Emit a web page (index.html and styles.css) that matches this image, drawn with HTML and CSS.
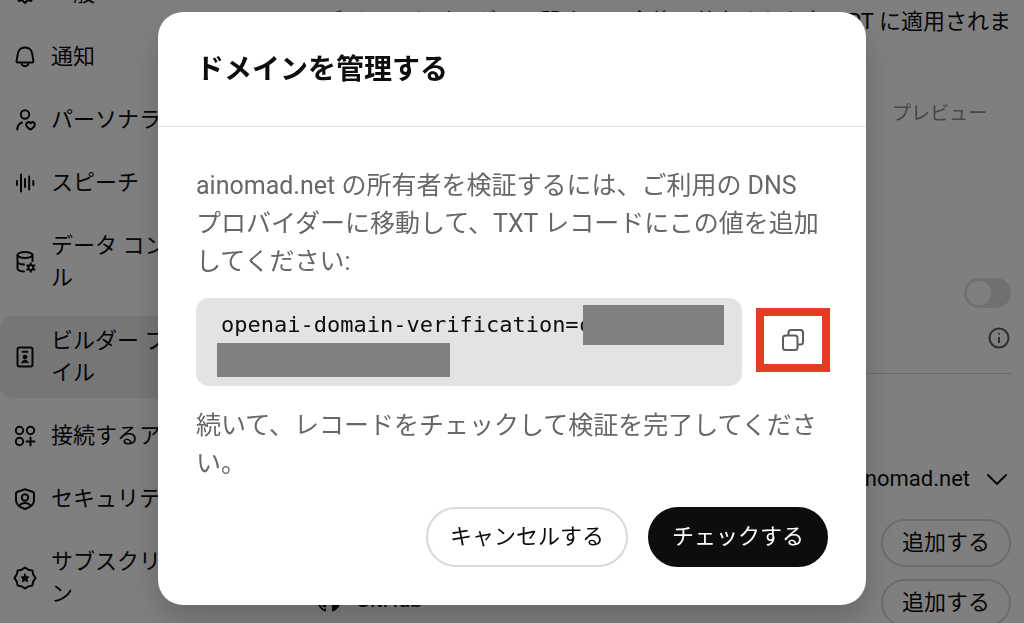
FILE: index.html
```html
<!DOCTYPE html>
<html lang="ja">
<head>
<meta charset="utf-8">
<meta name="viewport" content="width=device-width, initial-scale=1">
<title>ドメインを管理する</title>
<link rel="stylesheet" href="styles.css">
</head>
<body>
<div class="page">
  <nav class="sidebar" aria-label="設定">
    <a class="item" href="#"><svg class="icon" viewBox="0 0 24 24"><path d="M10 3h4l1 3 3-1 2 4-2 3 2 3-2 4-3-1-3 3-3-3-3 1-2-4 2-3-2-3 2-4 3 1z"/><circle cx="12" cy="12" r="3"/></svg><span>一般</span></a>
    <a class="item" href="#"><svg class="icon" viewBox="0 0 24 24"><path d="M12 2.500c-4.400 0-7 3-7.300 7L3.600 16q-.2 1.500 1.200 1.500h14.400q1.400 0 1.200-1.500l-1.100-6.500c-.3-4-2.900-7-7.300-7zM8.500 18c.4 4.200 6.600 4.200 7 0"/></svg><span>通知</span></a>
    <a class="item" href="#"><svg class="icon" viewBox="0 0 24 24"><circle cx="12" cy="6.500" r="4.200"/><path d="M9 14.500c-3 1-4.500 3.500-4.800 7M17.500 21.500c-2.800-1.500-4.300-3.200-4.300-5 0-2.600 3-3.200 4.300-1.200 1.300-2 4.300-1.400 4.300 1.200 0 1.800-1.500 3.500-4.300 5z"/></svg><span>パーソナライズ</span></a>
    <a class="item" href="#"><svg class="icon" viewBox="0 0 24 24"><path d="M4 10v4M8 3.500v17M12 8v8M16.200 5.500v13M20.300 10v4"/></svg><span>スピーチ</span></a>
    <a class="item" href="#"><svg class="icon" viewBox="0 0 24 24"><ellipse cx="12" cy="5" rx="7.500" ry="3"/><path d="M4.500 5v13.500c0 1.500 2.500 2.700 6.500 3M19.500 5v6M4.500 12c.3 1.300 2.800 2.300 6.500 2.500"/><circle cx="17.800" cy="17.500" r="2.500"/><path d="M17.800 13.300v1.500M17.800 20.200v1.500M14.200 15.400l1.300.8M20.100 18.800l1.300.8M21.400 15.400l-1.300.8M15.500 18.800l-1.300.8"/></svg><span>データ コントロール</span></a>
    <a class="item item-active" href="#" aria-current="page"><svg class="icon" viewBox="0 0 24 24"><rect x="4.500" y="2.500" width="15" height="19" rx="2"/><path d="M9.700 6.700h4.600"/><circle class="solid" cx="12" cy="12" r="1.900"/><path class="solid" d="M8.800 17.800c.8-3.600 5.600-3.600 6.400 0q-3.200-1.300-6.400 0z"/></svg><span>ビルダー プロファイル</span></a>
    <a class="item" href="#"><svg class="icon" viewBox="0 0 24 24"><circle cx="6.500" cy="6.500" r="3.700"/><circle cx="17.500" cy="6.500" r="3.700"/><circle cx="6.500" cy="17.500" r="3.700"/><path d="M17.500 13.500v8M13.500 17.500h8"/></svg><span>接続するアプリ</span></a>
    <a class="item" href="#"><svg class="icon" viewBox="0 0 24 24"><path d="M12 2.300 20 5q1 .4 1 1.500V13c0 4.500-4 7.500-9 9-5-1.500-9-4.500-9-9V6.500Q3 5.400 4 5z"/><circle cx="12" cy="10.500" r="3.200"/><path d="M6.500 18.500c2.300-3.300 8.700-3.300 11 0"/></svg><span>セキュリティ</span></a>
    <a class="item" href="#"><svg class="icon" viewBox="0 0 24 24"><path d="M12 1.500Q15.300 4.500 19.400 4.600 19.500 8.700 22.500 12 19.500 15.300 19.400 19.400 15.300 19.500 12 22.500 8.700 19.500 4.600 19.400 4.500 15.300 1.500 12 4.500 8.700 4.600 4.600 8.700 4.500 12 1.500z"/><path class="solid" d="m12 8 1.200 2.700 2.900.3-2.200 1.900.7 2.900-2.600-1.500-2.600 1.500.7-2.900L7.900 11l2.900-.3z"/></svg><span>サブスクリプション</span></a>
  </nav>
  <main class="content">
    <p class="intro">デザインやビルダーの設定は、全体で共有された各 GPT に適用されま</p>
    <p class="preview">プレビュー</p>
    <div class="toggle-row"><input class="toggle" type="checkbox" role="switch" aria-label="名前を表示"></div>
    <div class="info-row"><button class="plain" type="button" aria-label="詳細"><svg class="info-icon" viewBox="0 0 24 24"><circle cx="12" cy="12" r="9.500"/><path d="M12 11v6M12 7v1.500"/></svg></button></div>
    <div class="domain-row"><button class="plain domain" type="button">ainomad.net<svg class="icon" viewBox="0 0 24 24"><path d="m3 8 9 9 9-9"/></svg></button></div>
    <ul class="links">
      <li class="link-row"><span class="service"><svg class="icon" viewBox="0 0 24 24"><rect x="2" y="2" width="20" height="20" rx="3"/><path d="M7 10v8M11 18v-8M11 14c0-5 6-5 6 0v4"/></svg>LinkedIn</span><button class="button add" type="button">追加する</button></li>
      <li class="link-row"><span class="service"><svg class="mark" viewBox="0 0 16 16"><path d="M8 0C3.580 0 0 3.580 0 8c0 3.540 2.290 6.530 5.470 7.590.4.070.55-.17.55-.38 0-.19-.01-.82-.01-1.490-2.010.37-2.530-.49-2.690-.94-.09-.23-.48-.94-.82-1.130-.28-.15-.68-.52-.01-.53.63-.01 1.080.58 1.230.82.72 1.210 1.870.87 2.330.66.07-.52.28-.87.51-1.070-1.780-.2-3.640-.89-3.640-3.950 0-.87.31-1.590.82-2.150-.08-.2-.36-1.020.08-2.120 0 0 .67-.21 2.200.82.64-.18 1.320-.27 2-.27s1.360.09 2 .27c1.530-1.040 2.200-.82 2.200-.82.44 1.100.16 1.920.08 2.120.51.56.82 1.270.82 2.150 0 3.070-1.870 3.750-3.650 3.950.29.25.54.73.54 1.480 0 1.070-.01 1.930-.01 2.200 0 .21.15.46.55.38A8 8 0 0 0 16 8c0-4.420-3.580-8-8-8z"/></svg>GitHub</span><button class="button add" type="button">追加する</button></li>
    </ul>
  </main>
</div>
<div class="backdrop">
  <section class="dialog" role="dialog" aria-modal="true" aria-labelledby="dialog-title">
    <header class="dialog-header"><h2 id="dialog-title">ドメインを管理する</h2></header>
    <div class="dialog-body">
      <p>ainomad.net の所有者を検証するには、ご利用の DNS プロバイダーに移動して、TXT レコードにこの値を追加してください:</p>
      <div class="record">
        <code class="record-value">
          <span class="record-line"><span>openai-domain-verification=c</span><span class="mask mask-end"></span></span>
          <span class="mask mask-next"></span>
        </code>
        <button class="copy" type="button" aria-label="コピー"><svg class="icon" viewBox="0 0 24 24"><rect x="2" y="7.500" width="14.500" height="14.500" rx="2.500"/><path d="M7.500 7V4.500Q7.500 2 10 2h9.500Q22 2 22 4.500V14q0 2.500-2.500 2.500H17"/></svg></button>
      </div>
      <p>続いて、レコードをチェックして検証を完了してください。</p>
    </div>
    <footer class="dialog-footer">
      <button class="button cancel" type="button">キャンセルする</button>
      <button class="button check" type="button">チェックする</button>
    </footer>
  </section>
</div>
</body>
</html>
```
FILE: styles.css
```css
* { box-sizing: border-box; }

body {
  margin: 0;
  height: 100vh;
  overflow: hidden;
  background: #fff;
  color: #0d0d0d;
  font: 22px/32px Roboto, "Noto Sans CJK JP", sans-serif;
}

p, h2, ul { margin: 0; padding: 0; }
button { font: inherit; color: inherit; cursor: pointer; }

.icon {
  flex: none;
  width: 24px;
  height: 24px;
  fill: none;
  stroke: currentColor;
  stroke-width: 2;
  stroke-linecap: round;
  stroke-linejoin: round;
}
.icon .solid { fill: currentColor; stroke-width: 1; }
.mark { flex: none; width: 24px; height: 24px; fill: currentColor; }

.page { display: flex; height: 100%; overflow: hidden; }

.sidebar {
  flex: none;
  width: 250px;
  margin-top: -31px;
  display: flex;
  flex-direction: column;
  gap: 13px;
}
.item {
  flex: none;
  display: flex;
  align-items: center;
  gap: 14px;
  padding: 9px 12px 9px 13px;
  border-radius: 12px;
  color: inherit;
  text-decoration: none;
}
.item-active { background: #ececec; }

.content {
  flex: 1;
  min-width: 0;
  display: flex;
  flex-direction: column;
  padding: 6px 13px 0 67px;
}
.intro { align-self: flex-end; white-space: nowrap; }
.preview {
  align-self: flex-end;
  margin: 60px 24px 0 0;
  color: #8f8f8f;
  font-size: 19px;
}
.toggle-row { display: flex; justify-content: flex-end; margin-top: 148px; }
.toggle {
  appearance: none;
  width: 47px;
  height: 30px;
  margin: 0;
  padding: 3px;
  border-radius: 15px;
  background: #e0e0e0;
}
.toggle::before {
  content: "";
  display: block;
  width: 24px;
  height: 24px;
  border-radius: 50%;
  background: #fff;
}
.info-row {
  display: flex;
  justify-content: flex-end;
  padding: 18px 0 23px;
  border-bottom: 1px solid #d4d4d4;
}
.plain { display: flex; padding: 0; border: 0; background: none; }
.info-icon {
  width: 24px;
  height: 24px;
  fill: none;
  stroke: #5d5d5d;
  stroke-width: 2;
}
.domain-row { display: flex; justify-content: flex-end; margin-top: 89px; }
.domain { align-items: center; gap: 15px; padding-right: 2px; }

.links {
  display: flex;
  flex-direction: column;
  gap: 12px;
  margin-top: 24px;
  list-style: none;
}
.link-row { display: flex; align-items: center; justify-content: space-between; }
.service { display: flex; align-items: center; gap: 14px; padding-bottom: 6px; }

.button {
  border: 2px solid #d9d9d9;
  border-radius: 30px;
  background: none;
  white-space: nowrap;
}
.add { height: 48px; padding: 0 19px; }

.backdrop {
  position: fixed;
  inset: 0;
  display: flex;
  align-items: flex-start;
  justify-content: center;
  padding: 12px;
  background: rgba(0, 0, 0, 0.5);
}
.dialog {
  width: 100%;
  max-width: 708px;
  border-radius: 25px;
  background: #fff;
  box-shadow: 0 16px 32px rgba(0, 0, 0, 0.18);
}
.dialog-header { padding: 39px 38px 37px; border-bottom: 1px solid #e0e0e0; }
.dialog-header h2 { font-size: 28px; line-height: 38px; font-weight: 700; }

.dialog-body {
  padding: 40px 36px 24px 38px;
  color: #676767;
  font-size: 25px;
  line-height: 38px;
}
.dialog-body p { padding-right: 8px; }
.record { display: flex; align-items: center; gap: 14px; margin: 17px 0 21px; }
.record-value {
  flex: 1;
  display: flex;
  flex-direction: column;
  padding: 7px 18px 9px 21px;
  border-radius: 13px;
  background: #e3e3e3;
  color: #0d0d0d;
  font: 22px/40px "DejaVu Sans Mono", monospace;
}
.record-line { display: flex; padding-left: 4px; }
.mask { flex: none; background: #808080; }
.mask-end { width: 141px; height: 40px; margin-left: -9px; }
.mask-next { width: 233px; height: 34px; margin-top: -2px; }
.copy {
  display: flex;
  align-items: center;
  justify-content: center;
  width: 74px;
  height: 64px;
  margin-bottom: 4px;
  padding: 0;
  border: 8px solid #e03e22;
  background: #fff;
  color: #5d5d5d;
}

.dialog-footer {
  display: flex;
  justify-content: flex-end;
  gap: 20px;
  padding: 0 38px 38px;
}
.cancel, .check { height: 60px; padding: 0 22px; }
.check { border-color: #0d0d0d; background: #0d0d0d; color: #fff; }
```
